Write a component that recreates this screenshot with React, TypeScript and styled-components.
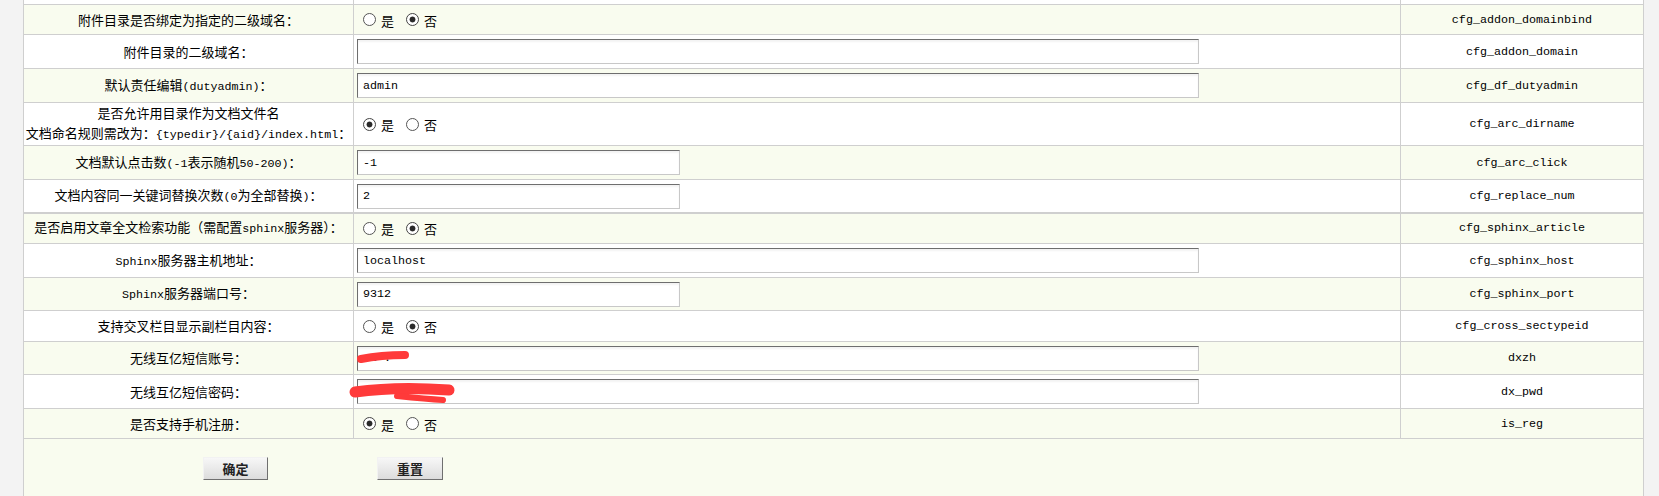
import React from 'react';
import styled, { createGlobalStyle, css } from 'styled-components';

const GlobalStyle = createGlobalStyle`
  html, body { margin: 0; padding: 0; }
  body {
    background: #f3f3f3;
    font-family: "Noto Sans CJK SC", "Liberation Sans", sans-serif;
    font-size: 13px;
    color: #000;
  }
`;

const Page = styled.div`
  padding-left: 23px;
  height: 496px;
  overflow: hidden;
`;

const Table = styled.table`
  width: 1621px;
  table-layout: fixed;
  border-collapse: separate;
  border-spacing: 1px;
  background: #cfcfcf;
  margin-top: -1px;
`;

const Row = styled.tr<{ $light?: boolean; $h: number; $sep?: boolean }>`
  height: ${p => p.$h}px;
  & > td {
    background: ${p => (p.$light ? '#f9fcef' : '#ffffff')};
    ${p => p.$sep && css`box-shadow: inset 0 1px 0 #cfcfcf;`}
  }
`;

const LabelCell = styled.td`
  padding: 0;
  text-align: center;
  vertical-align: middle;
  line-height: 20px;
  white-space: nowrap;
`;

const ValueCell = styled.td`
  padding: 0 0 0 3px;
  text-align: left;
  vertical-align: middle;
`;

const VarCell = styled.td`
  padding: 0;
  text-align: center;
  vertical-align: middle;
  font-family: "Liberation Mono", monospace;
  font-size: 11.7px;
`;

const Latin = styled.span`
  font-family: "Liberation Mono", monospace;
  font-size: 11.7px;
`;

const RadioGroup = styled.div`
  display: flex;
  align-items: center;
  padding-left: 6px;
`;

const Option = styled.label<{ $second?: boolean }>`
  display: flex;
  align-items: center;
  gap: 5px;
  margin-left: ${p => (p.$second ? 12 : 0)}px;
  line-height: 18px;
  & > span { padding-top: 2px; }
`;

const Radio = styled.input.attrs({ type: 'radio' })`
  appearance: none;
  -webkit-appearance: none;
  box-sizing: border-box;
  margin: 0;
  width: 13px;
  height: 13px;
  border-radius: 50%;
  border: 1px solid #555;
  background: #fff;
  &:checked {
    border-color: #444;
    background: radial-gradient(circle, #2a2a2a 0 2.6px, #fff 3.3px);
  }
`;

const Field = styled.div`
  position: relative;
  width: fit-content;
`;

const TextField = styled.input<{ $short?: boolean }>`
  display: block;
  box-sizing: border-box;
  width: ${p => (p.$short ? 323 : 842)}px;
  height: 25px;
  margin: 0;
  padding: 0 5px;
  border: 1px solid;
  border-color: #6e6e6e #c8c8c8 #c8c8c8 #6e6e6e;
  box-shadow: inset 0 2px 2px rgba(0, 0, 0, 0.05);
  background: #fff;
  font-family: "Liberation Mono", monospace;
  font-size: 11.7px;
  color: #000;
  outline: none;
`;

const Scribble = styled.svg`
  position: absolute;
  left: 0;
  top: 0;
  overflow: visible;
  pointer-events: none;
`;

const ActionCell = styled.td`
  padding: 18px 0 0 179px;
  vertical-align: top;
  background: #f9fcef;
`;

const Actions = styled.div`
  display: flex;
  gap: 109px;
`;

const Button = styled.button<{ $w: number }>`
  box-sizing: border-box;
  width: ${p => p.$w}px;
  height: 23px;
  padding: 0;
  border: 1px solid;
  border-color: #f2f2f2 #6f6f6f #6f6f6f #f2f2f2;
  background: linear-gradient(#f7f7f7, #dcdcdc);
  font-family: "Noto Sans CJK SC", sans-serif;
  font-size: 13px;
  font-weight: 700;
  color: #222;
  line-height: 20px;
`;

type Item = {
  label: React.ReactNode;
  name: string;
  kind: 'radio' | 'long' | 'short';
  value?: string;
  yes?: boolean;
  h: number;
  sep?: boolean;
  scribble?: 1 | 2;
};

const items: Item[] = [
  { label: '附件目录是否绑定为指定的二级域名：', name: 'cfg_addon_domainbind', kind: 'radio', yes: false, h: 29 },
  { label: '附件目录的二级域名：', name: 'cfg_addon_domain', kind: 'long', value: '', h: 33 },
  { label: <>默认责任编辑<Latin>(dutyadmin)</Latin>：</>, name: 'cfg_df_dutyadmin', kind: 'long', value: 'admin', h: 33 },
  {
    label: (
      <>
        是否允许用目录作为文档文件名
        <br />
        文档命名规则需改为：<Latin>{'{typedir}/{aid}/index.html'}</Latin>：
      </>
    ),
    name: 'cfg_arc_dirname', kind: 'radio', yes: true, h: 41,
  },
  { label: <>文档默认点击数<Latin>(-1</Latin>表示随机<Latin>50-200)</Latin>：</>, name: 'cfg_arc_click', kind: 'short', value: '-1', h: 33 },
  { label: <>文档内容同一关键词替换次数<Latin>(0</Latin>为全部替换<Latin>)</Latin>：</>, name: 'cfg_replace_num', kind: 'short', value: '2', h: 32 },
  { label: <>是否启用文章全文检索功能（需配置<Latin>sphinx</Latin>服务器）：</>, name: 'cfg_sphinx_article', kind: 'radio', yes: false, h: 30, sep: true },
  { label: <><Latin>Sphinx</Latin>服务器主机地址：</>, name: 'cfg_sphinx_host', kind: 'long', value: 'localhost', h: 33 },
  { label: <><Latin>Sphinx</Latin>服务器端口号：</>, name: 'cfg_sphinx_port', kind: 'short', value: '9312', h: 32 },
  { label: '支持交叉栏目显示副栏目内容：', name: 'cfg_cross_sectypeid', kind: 'radio', yes: false, h: 30 },
  { label: '无线互亿短信账号：', name: 'dxzh', kind: 'long', value: '-2 .', h: 32, scribble: 1 },
  { label: '无线互亿短信密码：', name: 'dx_pwd', kind: 'long', value: '            .', h: 33, scribble: 2 },
  { label: '是否支持手机注册：', name: 'is_reg', kind: 'radio', yes: true, h: 29 },
];

function ScribbleMark({ kind }: { kind: 1 | 2 }) {
  if (kind === 1) {
    return (
      <Scribble width="60" height="25" viewBox="0 0 60 25">
        <path d="M4 13 Q 24 9 48 9" stroke="#ff3a3a" strokeWidth="8" strokeLinecap="round" fill="none" />
      </Scribble>
    );
  }
  return (
    <Scribble width="100" height="25" viewBox="0 0 100 25">
      <path d="M-2 13 Q 40 7 92 11" stroke="#ff3a3a" strokeWidth="11" strokeLinecap="round" fill="none" />
      <path d="M40 17 Q 70 20 86 21" stroke="#ff3a3a" strokeWidth="6" strokeLinecap="round" fill="none" />
    </Scribble>
  );
}

function Value({ item }: { item: Item }) {
  if (item.kind === 'radio') {
    return (
      <RadioGroup>
        <Option>
          <Radio name={item.name} defaultChecked={item.yes} />
          <span>是</span>
        </Option>
        <Option $second>
          <Radio name={item.name} defaultChecked={!item.yes} />
          <span>否</span>
        </Option>
      </RadioGroup>
    );
  }
  return (
    <Field>
      <TextField $short={item.kind === 'short'} defaultValue={item.value} name={item.name} />
      {item.scribble && <ScribbleMark kind={item.scribble} />}
    </Field>
  );
}

export default function App() {
  return (
    <>
      <GlobalStyle />
      <Page>
        <Table>
          <colgroup>
            <col style={{ width: 329 }} />
            <col style={{ width: 1046 }} />
            <col style={{ width: 242 }} />
          </colgroup>
          <tbody>
            <Row $h={4}>
              <LabelCell />
              <ValueCell />
              <VarCell />
            </Row>
            {items.map((item, i) => (
              <Row key={item.name} $h={item.h} $light={i % 2 === 0} $sep={item.sep}>
                <LabelCell>{item.label}</LabelCell>
                <ValueCell>
                  <Value item={item} />
                </ValueCell>
                <VarCell>{item.name}</VarCell>
              </Row>
            ))}
            <Row $h={80} $light>
              <ActionCell colSpan={3}>
                <Actions>
                  <Button $w={65}>确定</Button>
                  <Button $w={66}>重置</Button>
                </Actions>
              </ActionCell>
            </Row>
          </tbody>
        </Table>
      </Page>
    </>
  );
}
